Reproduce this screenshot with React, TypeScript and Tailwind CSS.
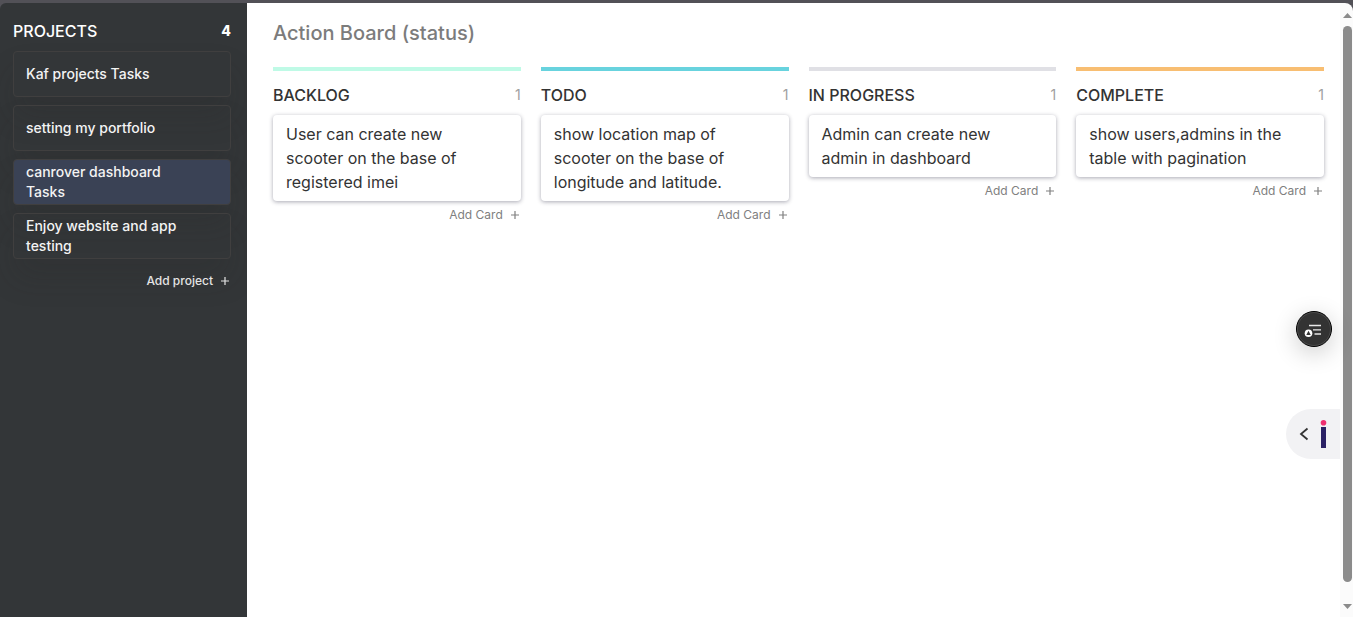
import React from "react";

type Column = { title: string; bar: string; cards: string[] };

const projects = [
  "Kaf projects Tasks",
  "setting my portfolio",
  "canrover dashboard Tasks",
  "Enjoy website and app testing",
];
const activeProject = 2;

const columns: Column[] = [
  { title: "BACKLOG", bar: "bg-[#bffae6]", cards: ["User can create new scooter on the base of registered imei"] },
  { title: "TODO", bar: "bg-[#68d3de]", cards: ["show location map of scooter on the base of longitude and latitude."] },
  { title: "IN PROGRESS", bar: "bg-[#e0e0e5]", cards: ["Admin can create new admin in dashboard"] },
  { title: "COMPLETE", bar: "bg-[#f8be72]", cards: ["show users,admins in the table with pagination"] },
];

function Plus() {
  return (
    <svg width="8" height="8" viewBox="0 0 8 8" aria-hidden="true">
      <path d="M4 0v8M0 4h8" stroke="currentColor" strokeWidth="1.2" />
    </svg>
  );
}

function Sidebar() {
  return (
    <aside className="w-[247px] shrink-0 rounded-tl-md bg-[#333638] pt-4 pr-4 pl-[13px] text-white">
      <div className="flex h-6 items-center justify-between text-base">
        <h2 className="font-medium">PROJECTS</h2>
        <span className="text-sm font-extrabold">4</span>
      </div>
      <nav className="mt-2 flex flex-col gap-2">
        {projects.map((name, i) => (
          <a
            key={name}
            href="#"
            className={
              "flex h-[46px] items-center rounded-sm border border-[#403f3f] pr-10 pl-3 text-sm leading-5 font-medium text-[#f3f3f3] shadow-[0_20px_30px_rgba(40,40,38,0.16)] " +
              (i === activeProject ? "bg-[#3a4255]" : "bg-transparent")
            }
          >
            {name}
          </a>
        ))}
      </nav>
      <div className="mt-3 flex justify-end pr-0.5">
        <button type="button" className="flex items-center gap-2 text-xs leading-5 font-medium text-[#e4e4e4]">
          Add project
          <Plus />
        </button>
      </div>
    </aside>
  );
}

function BoardColumn({ title, bar, cards }: Column) {
  return (
    <section className="min-w-0">
      <div className={"h-1 " + bar} />
      <div className="mt-3 flex h-6 items-center justify-between">
        <h2 className="text-base font-medium text-[#333333]">{title}</h2>
        <span className="text-sm text-[#a0a0a0]">{cards.length}</span>
      </div>
      <div className="mt-2 flex flex-col gap-2">
        {cards.map((text) => (
          <article
            key={text}
            className="rounded-sm bg-white py-[7px] pr-10 pl-[13px] text-base leading-6 text-[#333333] shadow-[0_1px_4px_rgba(40,40,65,0.4)]"
          >
            {text}
          </article>
        ))}
      </div>
      <div className="mt-1 flex justify-end pr-0.5">
        <button type="button" className="flex items-center gap-2 text-xs leading-5 text-[#808080]">
          Add Card
          <Plus />
        </button>
      </div>
    </section>
  );
}

function ScrollTrack() {
  return (
    <div className="flex w-[13px] shrink-0 flex-col items-center rounded-tr-lg bg-[#fbfbfb] pt-2.5 pb-2 pl-0.5" aria-hidden="true">
      <svg width="9" height="5" viewBox="0 0 9 5">
        <path d="M0 5L4.5 0L9 5z" fill="#8b8b8b" />
      </svg>
      <div className="mt-2 mb-[22px] w-[9px] flex-1 rounded-full bg-[#8b8b8b]" />
      <svg width="9" height="5" viewBox="0 0 9 5">
        <path d="M0 0h9L4.5 5z" fill="#8b8b8b" />
      </svg>
    </div>
  );
}

function FloatingTools() {
  return (
    <>
      <button
        type="button"
        aria-label="Open reader tools"
        className="fixed top-[311px] right-[21px] flex size-9 items-center justify-center rounded-full border border-black bg-[#333333] shadow-[0_6px_24px_rgba(0,0,0,0.2)]"
      >
        <svg width="34" height="34" viewBox="0 0 34 34" fill="none">
          <circle cx="17" cy="17" r="16.5" stroke="#555" strokeWidth="0.7" />
          <path d="M12 13.5h12M16 17.800h8M17.500 22h6.500" stroke="#e8e8e8" strokeWidth="1.3" />
          <circle cx="11.5" cy="21.2" r="3.8" fill="#fff" />
          <path d="M11.5 18.8l2.2 4.1H9.3z" fill="#333" />
        </svg>
      </button>
      <button
        type="button"
        aria-label="Expand side panel"
        className="fixed top-[409px] right-[13px] h-[50px] w-[54px] rounded-l-full bg-[#f2f2f4]"
      >
        <svg width="54" height="50" viewBox="0 0 54 50" fill="none">
          <path d="M21.5 19.5L15 25l6.5 5.5" stroke="#333" strokeWidth="1.8" />
          <circle cx="37.5" cy="13.7" r="2.8" fill="#ef2f70" />
          <path d="M35 18h5v21h-5z" fill="#2b2165" />
        </svg>
      </button>
    </>
  );
}

export default function App() {
  return (
    <div className="flex min-h-screen flex-col bg-[#525157] pt-[3px] font-['Inter','Liberation_Sans',sans-serif]">
      <div className="flex flex-1">
        <Sidebar />
        <main className="min-w-0 flex-1 bg-white pt-4 pr-4 pl-[26px]">
          <h1 className="text-xl leading-7 font-medium text-[#7c7c7c]">Action Board (status)</h1>
          <div className="mt-5 grid grid-cols-4 gap-5">
            {columns.map((column) => (
              <BoardColumn key={column.title} {...column} />
            ))}
          </div>
        </main>
        <ScrollTrack />
      </div>
      <FloatingTools />
    </div>
  );
}
